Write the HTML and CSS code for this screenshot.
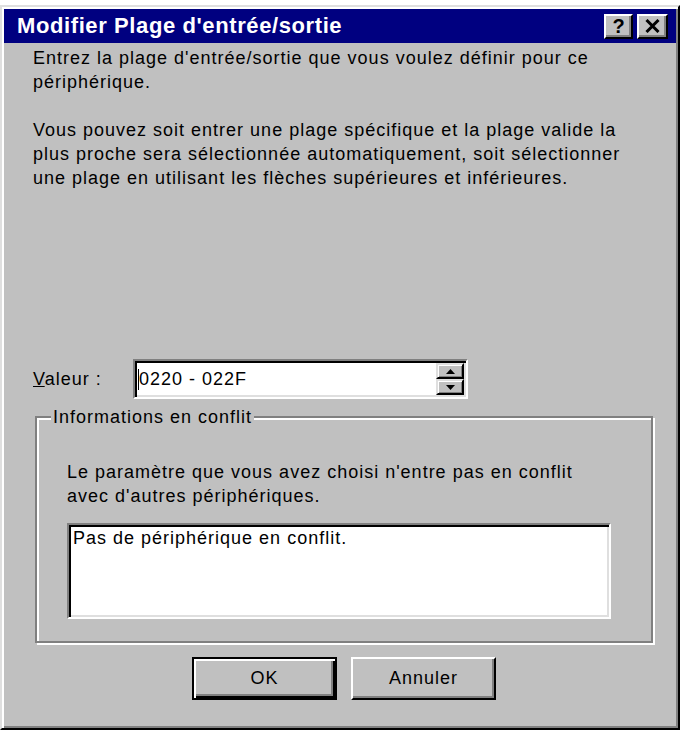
FILE: index.html
```html
<!DOCTYPE html>
<html lang="fr">
<head>
<meta charset="utf-8">
<title>Modifier Plage d'entrée/sortie</title>
<link rel="stylesheet" href="styles.css">
</head>
<body>
<div class="window">
  <div class="titlebar">
    <span class="title">Modifier Plage d'entrée/sortie</span>
    <div class="title-buttons">
      <span class="tbtn">?</span>
      <span class="tbtn tbtn-close">
        <svg width="15" height="14" viewBox="0 0 15 14"><path d="M1.5 1 L13.5 13 M13.5 1 L1.5 13" stroke="#000" stroke-width="3" fill="none"/></svg>
      </span>
    </div>
  </div>
  <div class="content">
    <p class="para">Entrez la plage d'entrée/sortie que vous voulez définir pour ce<br>périphérique.</p>
    <p class="para para2">Vous pouvez soit entrer une plage spécifique et la plage valide la<br>plus proche sera sélectionnée automatiquement, soit sélectionner<br>une plage en utilisant les flèches supérieures et inférieures.</p>
    <div class="value-row">
      <label class="value-label"><u>V</u>aleur :</label>
      <div class="spin-input">
        <div class="spin-text"><span class="caret"></span>0220 - 022F</div>
        <div class="spin-buttons">
          <span class="spin-btn"><svg width="9" height="5" viewBox="0 0 9 5"><path d="M0 5 L4.5 0 L9 5 Z" fill="#000"/></svg></span>
          <span class="spin-btn"><svg width="9" height="5" viewBox="0 0 9 5"><path d="M0 0 L9 0 L4.5 5 Z" fill="#000"/></svg></span>
        </div>
      </div>
    </div>
    <fieldset class="group">
      <legend class="group-label">Informations en conflit</legend>
      <p class="group-text">Le paramètre que vous avez choisi n'entre pas en conflit<br>avec d'autres périphériques.</p>
      <div class="listbox">Pas de périphérique en conflit.</div>
    </fieldset>
    <div class="buttons">
      <span class="btn btn-default"><span class="btn-inner">OK</span></span>
      <span class="btn"><span class="btn-inner">Annuler</span></span>
    </div>
  </div>
</div>
</body>
</html>
```

FILE: styles.css
```css
html, body {
  margin: 0;
  padding: 0;
  background: #ffffff;
}

body {
  font-family: "Liberation Sans", Arial, sans-serif;
  font-size: 18px;
  letter-spacing: 1px;
  color: #000;
}

.window {
  box-sizing: border-box;
  margin: 5px 0 0 0;
  width: 680px;
  height: 725px;
  background: #c0c0c0;
  border: 2px solid;
  border-color: #dfdfdf #000000 #000000 #dfdfdf;
  box-shadow: inset 2px 2px 0 #ffffff, inset -2px -2px 0 #808080;
  padding: 2px;
  display: flex;
  flex-direction: column;
}

.titlebar {
  height: 34px;
  background: #000080;
  display: flex;
  align-items: center;
  justify-content: space-between;
  padding: 0 8px 0 13px;
  flex: none;
}

.title {
  color: #ffffff;
  font-weight: bold;
  font-size: 22px;
  letter-spacing: 0.6px;
}

.title-buttons {
  display: flex;
  gap: 4px;
}

.tbtn {
  box-sizing: border-box;
  width: 29px;
  height: 25px;
  background: #c0c0c0;
  border: 2px solid;
  border-color: #ffffff #000000 #000000 #ffffff;
  box-shadow: inset -2px -2px 0 #808080;
  display: flex;
  align-items: center;
  justify-content: center;
  font-weight: bold;
  font-size: 20px;
  letter-spacing: 0;
  line-height: 1;
  padding-bottom: 1px;
}

.tbtn-close {
  width: 31px;
}

.content {
  flex: 1;
  display: flex;
  flex-direction: column;
  padding: 3px 21px 0 29px;
}

.para {
  margin: 0;
  line-height: 24px;
}

.para2 {
  margin-top: 24px;
}

.value-row {
  margin-top: 169px;
  display: flex;
  align-items: center;
}

.value-label {
  width: 100px;
}

.spin-input {
  box-sizing: border-box;
  width: 335px;
  height: 40px;
  background: #ffffff;
  border: 2px solid;
  border-color: #808080 #ffffff #ffffff #808080;
  box-shadow: inset 2px 2px 0 #000000, inset -2px -2px 0 #dfdfdf;
  display: flex;
  align-items: stretch;
  padding: 2px;
}

.spin-text {
  flex: 1;
  display: flex;
  align-items: center;
  padding-left: 1px;
}

.caret {
  width: 1px;
  height: 21px;
  background: #000;
  margin-right: 0;
}

.spin-buttons {
  width: 28px;
  display: flex;
  flex-direction: column;
}

.spin-btn {
  box-sizing: border-box;
  flex: 1;
  background: #c0c0c0;
  border: 2px solid;
  border-color: #dfdfdf #000000 #000000 #dfdfdf;
  box-shadow: inset 1px 1px 0 #ffffff, inset -1px -1px 0 #808080;
  display: flex;
  align-items: center;
  justify-content: center;
}

.group {
  margin: 6px 0 0 2px;
  width: 618px;
  box-sizing: border-box;
  height: 238px;
  border: 2px solid #808080;
  box-shadow: inset 2px 2px 0 #ffffff, 2px 2px 0 #ffffff;
  padding: 0 40px 0 30px;
  min-width: 0;
}

.group-label {
  padding: 0 2px;
  margin-left: -16px;
  background: #c0c0c0;
  line-height: 24px;
}

.group-text {
  margin: 31px 0 0 0;
  line-height: 24px;
}

.listbox {
  margin-top: 15px;
  box-sizing: border-box;
  height: 96px;
  background: #ffffff;
  border: 2px solid;
  border-color: #808080 #ffffff #ffffff #808080;
  box-shadow: inset 2px 2px 0 #000000, inset -2px -2px 0 #dfdfdf;
  padding: 2px 4px;
  line-height: 22px;
}

.buttons {
  margin-top: 14px;
  display: flex;
  justify-content: center;
  gap: 14px;
}

.btn {
  box-sizing: border-box;
  width: 145px;
  height: 43px;
  background: #c0c0c0;
  border: 2px solid;
  border-color: #ffffff #000000 #000000 #ffffff;
  box-shadow: inset -2px -2px 0 #808080;
  display: flex;
}

.btn-inner {
  flex: 1;
  display: flex;
  align-items: center;
  justify-content: center;
}

.btn-default {
  border-color: #000000;
  box-shadow: inset 2px 2px 0 #ffffff, inset -2px -2px 0 #000000, inset -4px -4px 0 #808080;
}
```
